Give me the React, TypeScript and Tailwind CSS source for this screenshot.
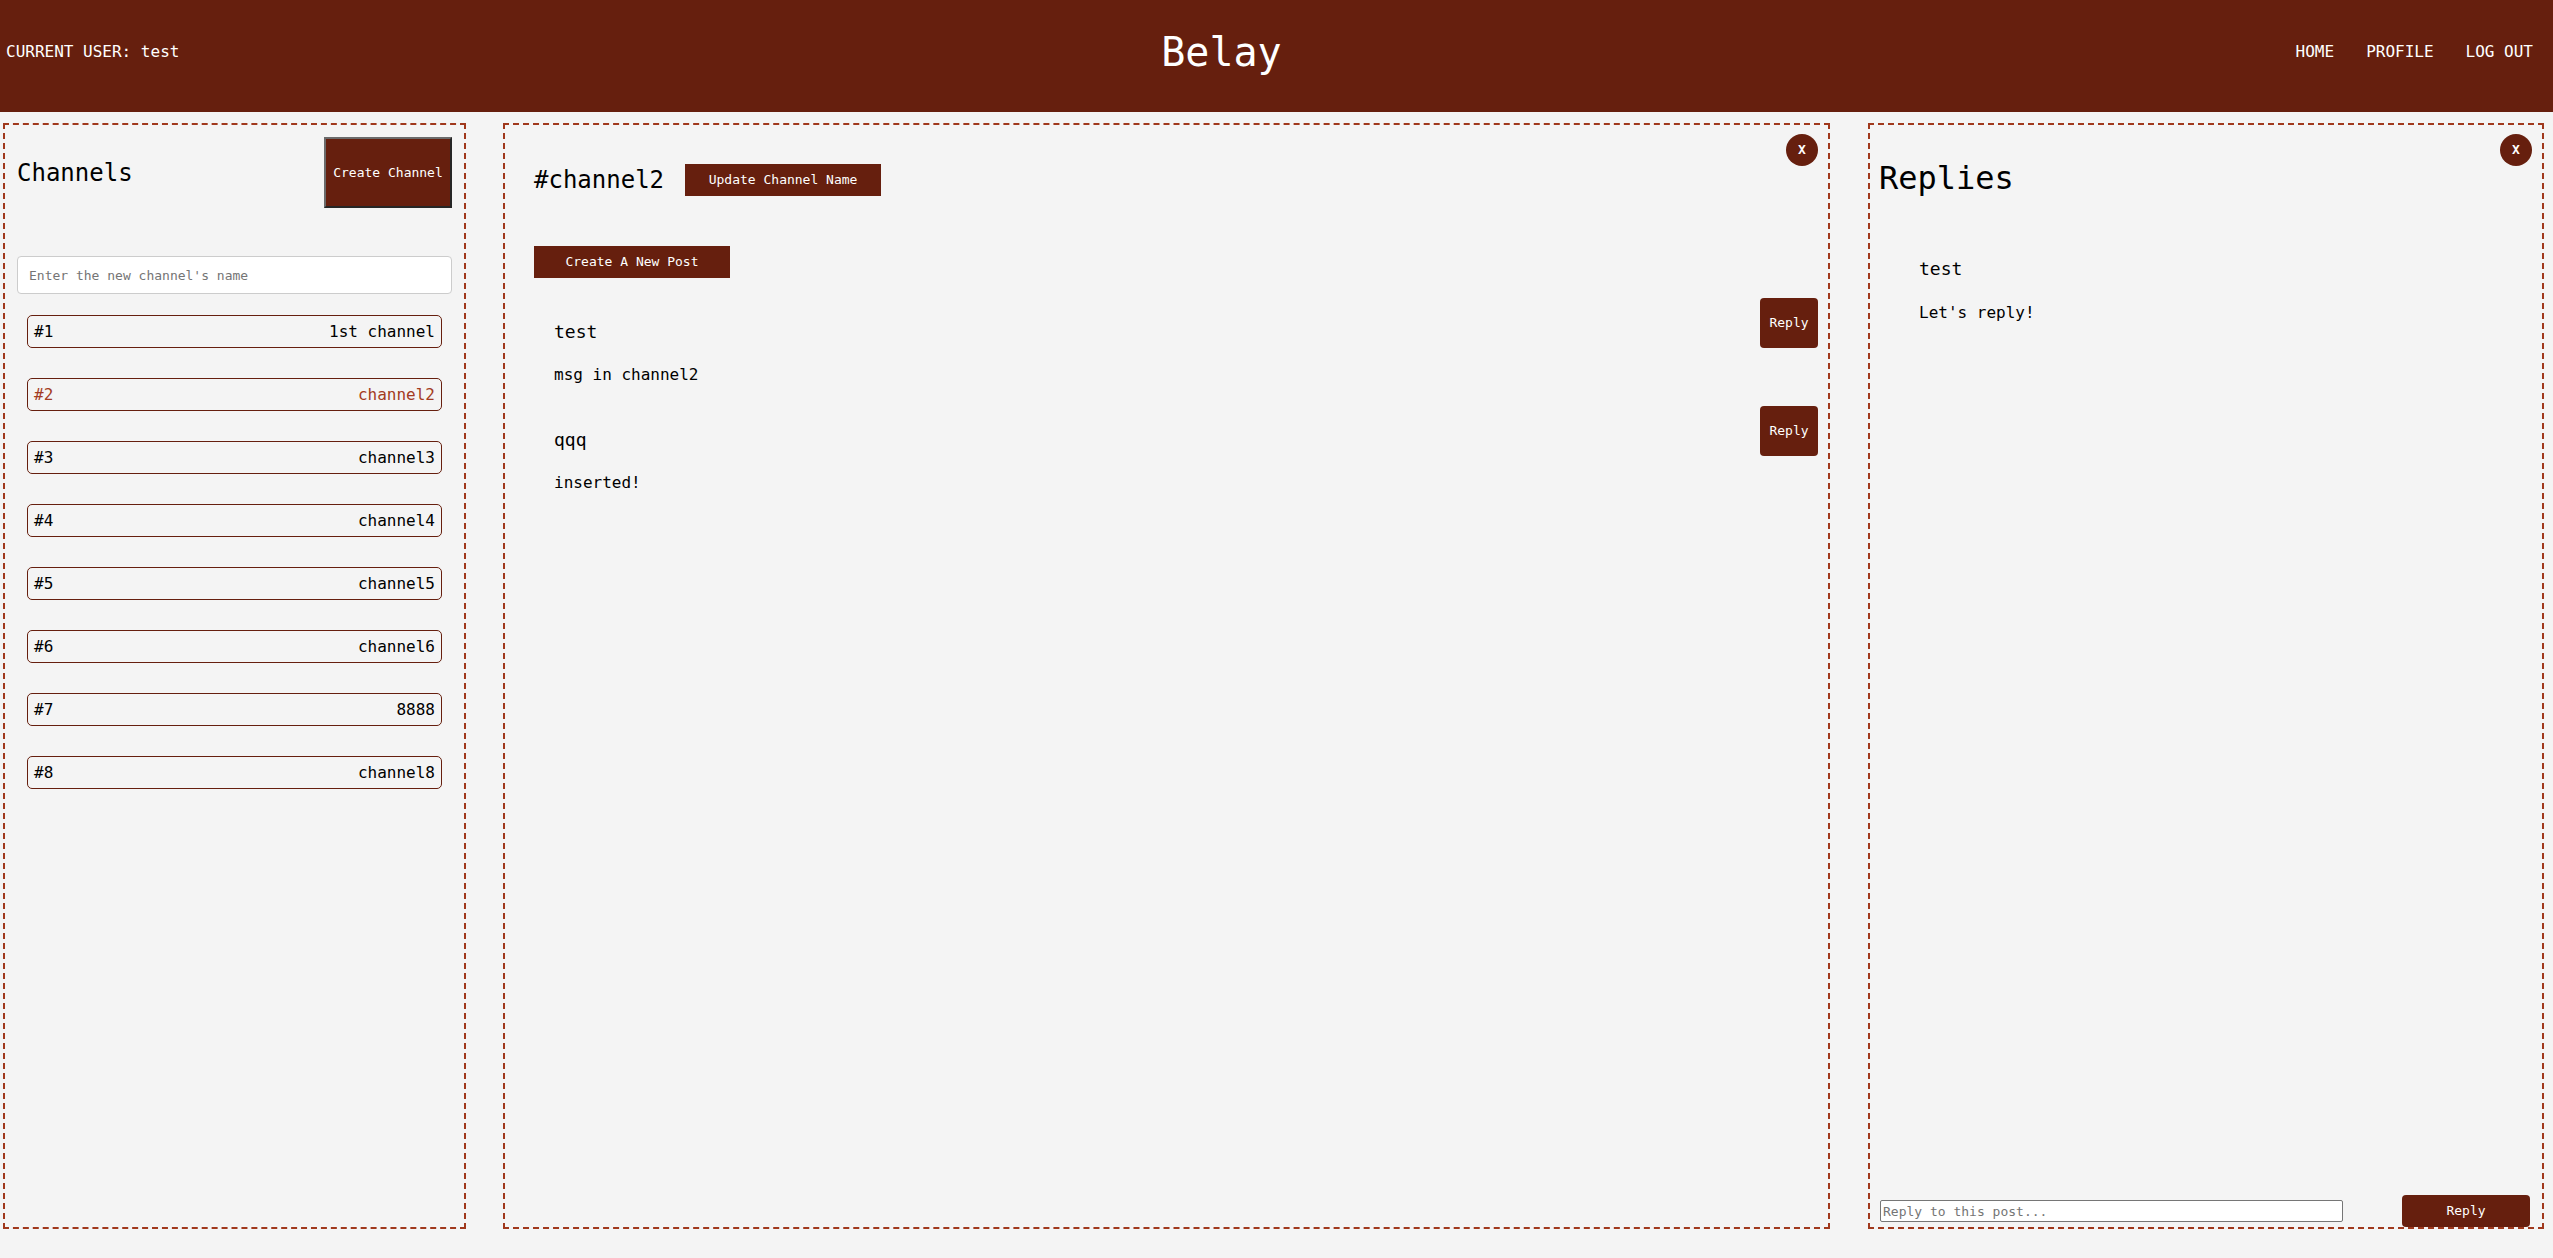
import { useState } from "react";

const channels = [
  { id: 1, name: "1st channel" },
  { id: 2, name: "channel2" },
  { id: 3, name: "channel3" },
  { id: 4, name: "channel4" },
  { id: 5, name: "channel5" },
  { id: 6, name: "channel6" },
  { id: 7, name: "8888" },
  { id: 8, name: "channel8" },
];

const posts = [
  { id: 1, author: "test", body: "msg in channel2" },
  { id: 2, author: "qqq", body: "inserted!" },
];

function CloseButton() {
  return (
    <button
      type="button"
      className="absolute right-[10px] top-[9px] flex h-[32px] w-[32px] items-center justify-center rounded-full bg-[#661f0e] text-[13px] font-bold text-white"
    >
      X
    </button>
  );
}

export default function App() {
  const [active, setActive] = useState(2);

  return (
    <div className="flex h-screen flex-col bg-[#f4f4f4] font-['DejaVu_Sans_Mono',monospace] text-black">
      <header className="flex h-[112px] shrink-0 items-center justify-between bg-[#661f0e] pb-[8px] pl-[6px] pr-[20px] text-white">
        <div className="text-[16px]">CURRENT USER: test</div>
        <h1 className="text-[40px] leading-none">Belay</h1>
        <nav className="flex text-[16px]">
          <a className="ml-8">HOME</a>
          <a className="ml-8">PROFILE</a>
          <a className="ml-8">LOG OUT</a>
        </nav>
      </header>

      <main className="flex pl-[3px] pt-[11px]">
        {/* channels */}
        <section className="flex h-[1106px] w-[463px] shrink-0 flex-col border-2 border-dashed border-[#a0381c] p-3">
          <div className="flex items-center justify-between">
            <h2 className="text-[24px]">Channels</h2>
            <button
              type="button"
              className="h-[71px] w-[128px] border-2 border-b-[#262626] border-l-[#6b6b6b] border-r-[#262626] border-t-[#6b6b6b] bg-[#661f0e] text-[13px] text-white"
            >
              Create Channel
            </button>
          </div>
          <input
            className="mt-12 h-[38px] w-full rounded-[4px] border border-[#cccccc] bg-white px-[11px] text-[13px] placeholder:text-[#757575]"
            placeholder="Enter the new channel's name"
          />
          <ul className="mt-[21px] flex flex-col gap-[30px] px-[10px]">
            {channels.map((c) => (
              <li
                key={c.id}
                onClick={() => setActive(c.id)}
                className={
                  "flex h-[33px] cursor-pointer items-center justify-between rounded-[5px] border border-[#661f0e] px-[6px] text-[16px] " +
                  (active === c.id ? "text-[#a33b22]" : "text-black")
                }
              >
                <span>#{c.id}</span>
                <span>{c.name}</span>
              </li>
            ))}
          </ul>
        </section>

        {/* posts */}
        <section className="relative ml-[37px] h-[1106px] w-[1327px] shrink-0 border-2 border-dashed border-[#a0381c] pl-[29px] pr-[10px] pt-[37px]">
          <CloseButton />
          <div className="flex items-center gap-[21px]">
            <h2 className="text-[24px]">#channel2</h2>
            <button
              type="button"
              className="h-[32px] w-[196px] bg-[#661f0e] text-[13px] text-white"
            >
              Update Channel Name
            </button>
          </div>
          <button
            type="button"
            className="mt-[48px] h-[32px] w-[196px] bg-[#661f0e] text-[13px] text-white"
          >
            Create A New Post
          </button>
          <div className="mt-[20px] flex flex-col gap-[19px]">
            {posts.map((p) => (
              <div key={p.id} className="flex items-start justify-between pl-[20px]">
                <div className="pt-[20px]">
                  <h3 className="text-[18px] leading-[27px]">{p.author}</h3>
                  <p className="mt-[18px] text-[16px] leading-[24px]">{p.body}</p>
                </div>
                <button
                  type="button"
                  className="h-[50px] w-[58px] rounded-[4px] bg-[#661f0e] text-[13px] text-white"
                >
                  Reply
                </button>
              </div>
            ))}
          </div>
        </section>

        {/* replies */}
        <section className="relative ml-[38px] flex h-[1106px] w-[676px] shrink-0 flex-col border-2 border-dashed border-[#a0381c] pl-[9px]">
          <CloseButton />
          <h1 className="mt-[29px] text-[32px] leading-[48px]">Replies</h1>
          <div className="mt-[53px] pl-[40px]">
            <h3 className="text-[18px] leading-[27px]">test</h3>
            <p className="mt-[19px] text-[16px] leading-[24px]">Let's reply!</p>
          </div>
          <div className="mt-auto flex items-center justify-between pl-[1px] pr-[12px]">
            <input
              className="h-[22px] w-[463px] rounded-[2px] border border-[#767676] bg-white px-[2px] text-[13px] placeholder:text-[#757575]"
              placeholder="Reply to this post..."
            />
            <button
              type="button"
              className="h-[32px] w-[128px] rounded-[4px] bg-[#661f0e] text-[13px] text-white"
            >
              Reply
            </button>
          </div>
        </section>
      </main>
    </div>
  );
}
